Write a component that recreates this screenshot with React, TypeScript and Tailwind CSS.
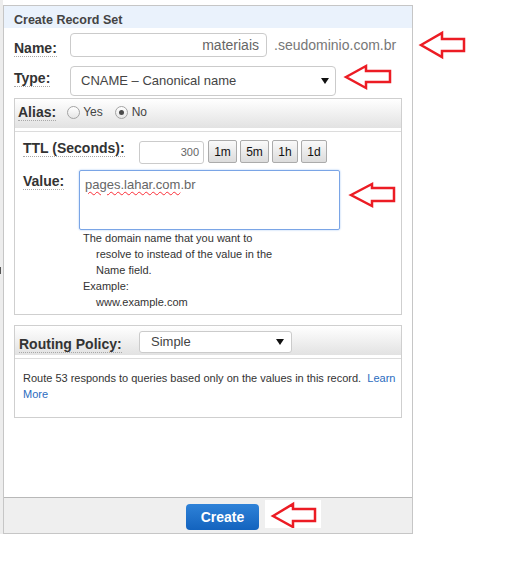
import React from 'react';

const labelCls =
  "font-bold text-[14px] leading-[16px] text-[#333] border-b border-dotted border-[#a8a8a8] whitespace-nowrap";

function Caret() {
  return (
    <svg width="8" height="6" viewBox="0 0 8 6">
      <polygon points="0,0 8,0 4,6" fill="#111" />
    </svg>
  );
}

function Radio({ checked }: { checked?: boolean }) {
  return (
    <span className="flex h-[13px] w-[13px] items-center justify-center rounded-full border border-[#a3a3a3] bg-gradient-to-b from-[#ffffff] to-[#e6e6e6]">
      {checked && <span className="h-[5px] w-[5px] rounded-full bg-[#4a4a4a]" />}
    </span>
  );
}

function TimeButton({ label, w }: { label: string; w: string }) {
  return (
    <button
      className={`${w} h-[23px] rounded-[2px] border border-[#ababab] bg-gradient-to-b from-[#fafafa] to-[#dcdcdc] text-[12px] leading-none text-[#111]`}
    >
      {label}
    </button>
  );
}

function Arrow({ points }: { points: string }) {
  return (
    <polygon
      points={points}
      fill="none"
      stroke="#ec1c24"
      strokeWidth="2.5"
      strokeLinejoin="miter"
    />
  );
}

export default function App() {
  return (
    <div className="relative h-[580px] w-[528px] overflow-hidden bg-white font-['Liberation_Sans',Arial,sans-serif]">
      <div className="flex items-start">
        {/* window edge on the left */}
        <div className="h-[534px] w-[3px] bg-[#ededed]">
          <div className="mt-[267px] h-[7px] w-[1px] bg-[#555]" />
        </div>

        <div className="mt-[5px] w-[410px] border border-[#c6c6c6] bg-white">
          <div className="h-[22px] bg-[#eaf2fc] pl-[10px] pt-[6px] text-[12.5px] font-bold leading-[16px] text-[#444]">
            Create Record Set
          </div>

          {/* Name */}
          <div className="mt-[5px] flex items-center pl-[10px]">
            <div className="flex w-[56px] self-end">
              <span className={labelCls}>Name:</span>
            </div>
            <div className="flex h-[24px] w-[197px] items-center justify-end rounded-[4px] border border-[#cbcbcb] pr-[7px] text-[14px] text-[#666]">
              materiais
            </div>
            <span className="ml-[7px] text-[14px] text-[#777]">.seudominio.com.br</span>
          </div>

          {/* Type */}
          <div className="mt-[9px] flex items-start pl-[10px]">
            <div className="mt-[4px] flex w-[56px]">
              <span className={labelCls}>Type:</span>
            </div>
            <div className="flex h-[30px] w-[266px] items-center justify-between rounded-[4px] border border-[#cbcbcb] pl-[10px] pr-[6px] text-[13px] text-[#444]">
              <span>CNAME – Canonical name</span>
              <Caret />
            </div>
          </div>

          {/* Alias box */}
          <div className="ml-[10px] mt-[2px] w-[388px] border border-[#cfcfcf]">
            <div className="border-b border-[#dcdcdc] pb-[3px]">
              <div className="flex h-[29px] items-start bg-gradient-to-b from-[#ffffff] to-[#e2e2e2] pl-[3px] pt-[5px]">
                <span className={labelCls}>Alias:</span>
                <div className="ml-[11px] flex h-[16px] items-center text-[12px] text-[#444]">
                  <Radio />
                  <span className="ml-[3px]">Yes</span>
                  <span className="ml-[12px] flex">
                    <Radio checked />
                  </span>
                  <span className="ml-[4px]">No</span>
                </div>
              </div>
            </div>

            <div className="pb-[4px] pl-[8px] pt-[8px]">
              {/* TTL */}
              <div className="flex items-start">
                <div className="flex w-[116px]">
                  <span className={labelCls}>TTL (Seconds):</span>
                </div>
                <div className="mt-[1px] flex h-[23px] w-[65px] items-center justify-end rounded-[3px] border border-[#cbcbcb] pr-[4px] text-[11px] text-[#666]">
                  300
                </div>
                <div className="ml-[4px] flex gap-[3px]">
                  <TimeButton label="1m" w="w-[29px]" />
                  <TimeButton label="5m" w="w-[29px]" />
                  <TimeButton label="1h" w="w-[26px]" />
                  <TimeButton label="1d" w="w-[26px]" />
                </div>
              </div>

              {/* Value */}
              <div className="mt-[6px] flex items-start">
                <div className="mt-[3px] flex w-[56px]">
                  <span className={labelCls}>Value:</span>
                </div>
                <div>
                  <div className="h-[60px] w-[261px] rounded-[2px] border border-[#7aa5e6] pl-[5px] pt-[6px] text-[13px] leading-[16px] text-[#666] shadow-[0_0_2px_#9cc0f2]">
                    <span className="underline decoration-red-500 decoration-wavy decoration-1 underline-offset-2">
                      pages.lahar.com
                    </span>
                    .br
                  </div>
                  <div className="pl-[4px] text-[11px] leading-[16px] text-[#333]">
                    <div>The domain name that you want to</div>
                    <div className="pl-[13px]">resolve to instead of the value in the</div>
                    <div className="pl-[13px]">Name field.</div>
                    <div>Example:</div>
                    <div className="pl-[13px]">www.example.com</div>
                  </div>
                </div>
              </div>
            </div>
          </div>

          {/* Routing policy box */}
          <div className="ml-[10px] mt-[10px] w-[388px] border border-[#cfcfcf]">
            <div className="border-b border-[#dcdcdc] pb-[3px]">
              <div className="flex h-[29px] items-end bg-gradient-to-b from-[#ffffff] to-[#e2e2e2] pl-[4px]">
                <div className="flex w-[120px] pb-[2px]">
                  <span className={labelCls}>Routing Policy:</span>
                </div>
                <div className="mb-[2px] flex h-[22px] w-[153px] items-center justify-between rounded-[3px] border border-[#cbcbcb] bg-white pl-[11px] pr-[7px] text-[13px] text-[#444]">
                  <span>Simple</span>
                  <Caret />
                </div>
              </div>
            </div>
            <div className="pb-[15px] pl-[8px] pt-[11px] text-[11px] leading-[16px] text-[#333]">
              <span className="whitespace-nowrap">
                Route 53 responds to queries based only on the values in this record.{'\u00a0 '}
                <span className="text-[#2b6cc0]">Learn</span>
              </span>
              <br />
              <span className="text-[#2b6cc0]">More</span>
            </div>
          </div>

          {/* Footer */}
          <div className="mt-[79px] flex items-start border-t border-[#b8b8b8] bg-[#efefef] pb-[3px] pl-[182px] pt-[2px]">
            <button className="mt-[4px] h-[26px] w-[73px] rounded-[4px] bg-gradient-to-b from-[#2e82d8] to-[#1363be] text-[14px] font-bold text-white">
              Create
            </button>
            <div className="ml-[6px] h-[28px] w-[56px] bg-white">
              <svg width="56" height="28" viewBox="0 0 56 28">
                <Arrow points="8,16 28,4 28,9 50,9 50,21 28,21 28,27" />
              </svg>
            </div>
          </div>
        </div>
      </div>

      {/* red annotation arrows */}
      <svg
        className="pointer-events-none absolute left-0 top-0"
        width="528"
        height="580"
        viewBox="0 0 528 580"
      >
        <Arrow points="421,45 442,33 442,39 464,39 464,51 442,51 442,57" />
        <Arrow points="346,77 366,66 366,71 390,71 390,82 366,82 366,88" />
        <Arrow points="351,195 372,184 372,188 394,188 394,201 372,201 372,206" />
      </svg>
    </div>
  );
}
